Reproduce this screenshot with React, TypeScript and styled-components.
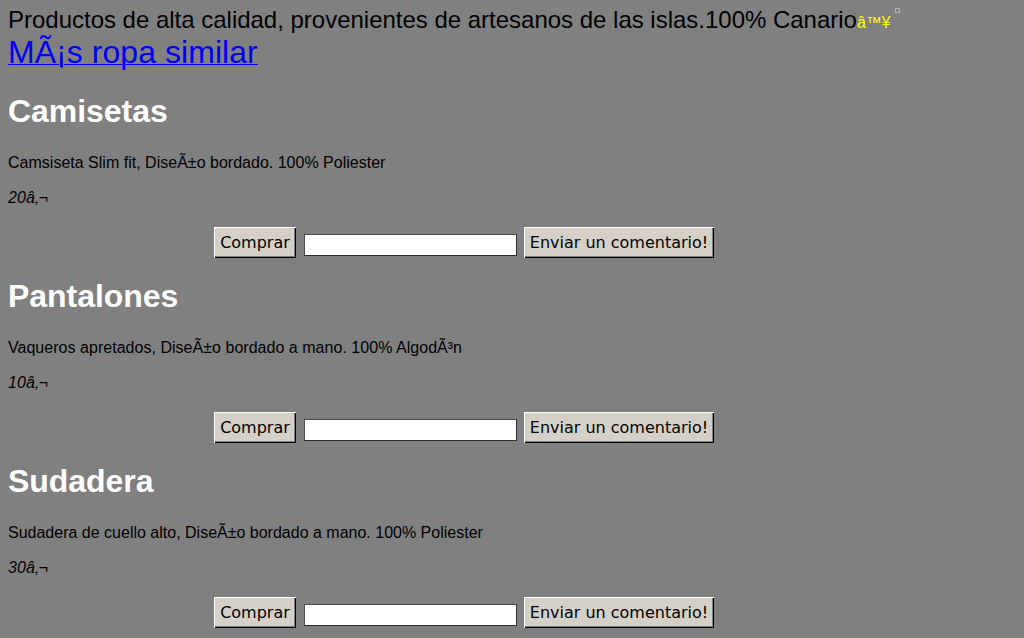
import React from 'react';
import styled, { createGlobalStyle } from 'styled-components';

const GlobalStyle = createGlobalStyle`
  html, body { margin: 0; height: 638px; overflow: hidden; background: #808080; }
  body { font-family: "Liberation Sans", Arial, sans-serif; font-size: 16px; color: #000; }
`;

const Page = styled.main`
  height: 638px;
  box-sizing: border-box;
  padding: 8px 8px 0;
  overflow: hidden;
  white-space: nowrap;
`;

const Intro = styled.header`
  display: flex;
  align-items: baseline;
  height: 27px;
  line-height: 23px;
  font-size: 24px;
  letter-spacing: -0.012px;
`;

const Heart = styled.span`
  font-size: 16px;
  letter-spacing: -0.1px;
  color: #ff0;
`;

const MissingImage = styled.span`
  align-self: flex-start;
  box-sizing: border-box;
  width: 5px;
  height: 5px;
  margin-left: 5px;
  border: 1px solid #b4b4b4;
`;

const MoreLink = styled.a`
  display: block;
  width: max-content;
  height: 37px;
  line-height: 35px;
  font-size: 32px;
  letter-spacing: 0.05px;
  color: #00e;
  text-decoration: underline;
  text-decoration-thickness: 1px;
`;

const Product = styled.section`
  height: 185px;
  padding-top: 21px;
  box-sizing: border-box;
`;

const Title = styled.h1`
  margin: 0 0 24px;
  font-size: 32px;
  line-height: 36px;
  letter-spacing: -0.04px;
  color: #fff;
`;

const Description = styled.p<{ $tracking: number }>`
  margin: 0 0 16px;
  line-height: 19px;
  letter-spacing: ${({ $tracking }) => $tracking}px;
`;

const Price = styled.em`
  display: block;
  line-height: 19px;
  letter-spacing: 0.15px;
`;

const Actions = styled.form`
  display: flex;
  align-items: flex-start;
  margin: 20px 0 0 206px;
`;

const Button = styled.button<{ $width: number }>`
  box-sizing: border-box;
  width: ${({ $width }) => $width}px;
  height: 31px;
  padding: 0;
  border: 0;
  background: #d4d0c8;
  box-shadow: inset 1px 1px #fff, inset -1px -1px #000, inset -2px -2px #808080;
  font: 16px/31px "DejaVu Sans", sans-serif;
  color: #000;
  white-space: nowrap;
`;

const Comment = styled.input`
  box-sizing: border-box;
  width: 213px;
  height: 22px;
  margin: 7px 7px 0 8px;
  padding: 1px 2px;
  border: 1px solid #2b2b33;
  border-top-color: #4b4b50;
  border-left-color: #4b4b50;
  border-radius: 0;
  background: #fff;
`;

const products = [
  { name: 'Camisetas', text: 'Camsiseta Slim fit, DiseÃ±o bordado. 100% Poliester', price: '20â‚¬', tracking: 0.01 },
  { name: 'Pantalones', text: 'Vaqueros apretados, DiseÃ±o bordado a mano. 100% AlgodÃ³n', price: '10â‚¬', tracking: 0.03 },
  { name: 'Sudadera', text: 'Sudadera de cuello alto, DiseÃ±o bordado a mano. 100% Poliester', price: '30â‚¬', tracking: 0 },
];

export default function App() {
  return (
    <Page>
      <GlobalStyle />
      <Intro>
        <span>Productos de alta calidad, provenientes de artesanos de las islas.100% Canario</span>
        <Heart>â™¥</Heart>
        <MissingImage />
      </Intro>
      <MoreLink href="#">MÃ¡s ropa similar</MoreLink>
      {products.map((product) => (
        <Product key={product.name}>
          <Title>{product.name}</Title>
          <Description $tracking={product.tracking}>{product.text}</Description>
          <Price>{product.price}</Price>
          <Actions>
            <Button type="button" $width={82}>Comprar</Button>
            <Comment aria-label="Comentario" />
            <Button type="button" $width={190}>Enviar un comentario!</Button>
          </Actions>
        </Product>
      ))}
    </Page>
  );
}
